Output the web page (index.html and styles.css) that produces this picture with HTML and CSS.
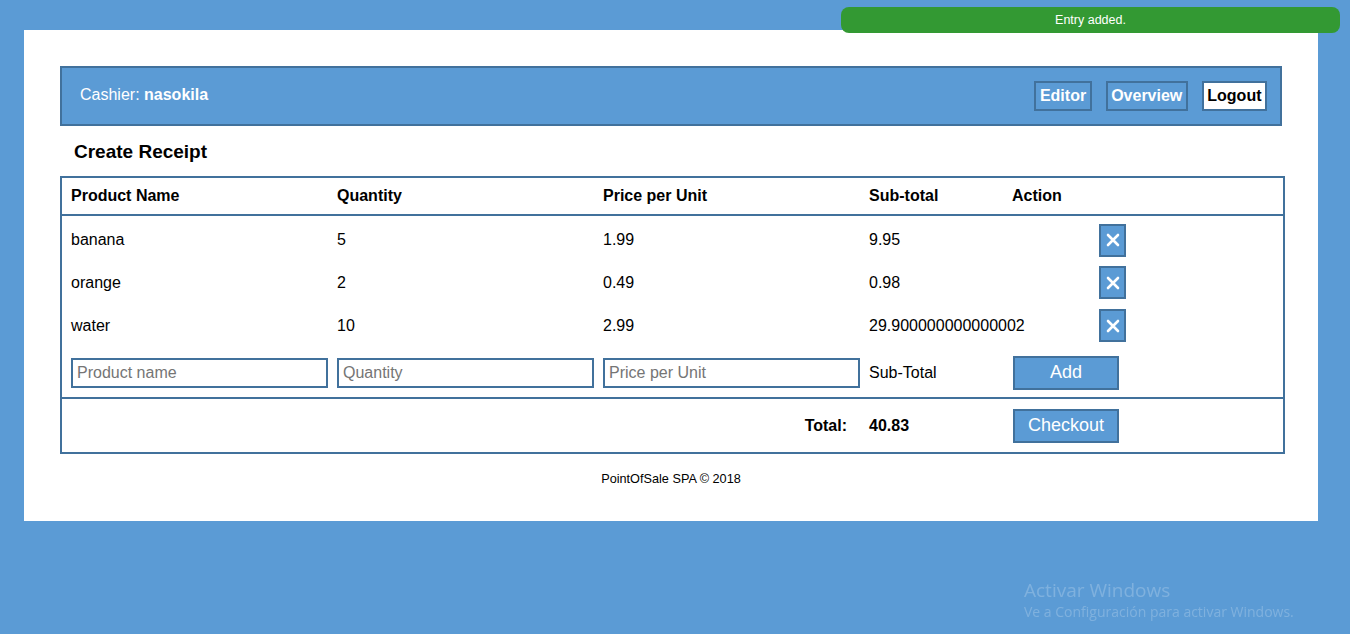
FILE: index.html
```html
<!DOCTYPE html>
<html>
<head>
<meta charset="utf-8">
<link rel="stylesheet" href="styles.css">
</head>
<body>
<div class="toast">Entry added.</div>
<main class="page">
  <header class="topbar">
    <div class="cashier">Cashier: <b>nasokila</b></div>
    <nav class="nav">
      <a class="navbtn">Editor</a>
      <a class="navbtn">Overview</a>
      <a class="navbtn active">Logout</a>
    </nav>
  </header>
  <h2 class="title">Create Receipt</h2>
  <table class="receipt">
    <colgroup>
      <col class="c1"><col class="c2"><col class="c3"><col class="c4"><col class="c5">
    </colgroup>
    <thead>
      <tr><th>Product Name</th><th>Quantity</th><th>Price per Unit</th><th>Sub-total</th><th>Action</th></tr>
    </thead>
    <tbody>
      <tr class="item"><td>banana</td><td>5</td><td>1.99</td><td>9.95</td><td><button class="del"><svg width="14" height="14" viewBox="0 0 14 14"><path d="M2 2L12 12M12 2L2 12" stroke="#fff" stroke-width="2.6" stroke-linecap="round"/></svg></button></td></tr>
      <tr class="item"><td>orange</td><td>2</td><td>0.49</td><td>0.98</td><td><button class="del"><svg width="14" height="14" viewBox="0 0 14 14"><path d="M2 2L12 12M12 2L2 12" stroke="#fff" stroke-width="2.6" stroke-linecap="round"/></svg></button></td></tr>
      <tr class="item"><td>water</td><td>10</td><td>2.99</td><td>29.900000000000002</td><td><button class="del"><svg width="14" height="14" viewBox="0 0 14 14"><path d="M2 2L12 12M12 2L2 12" stroke="#fff" stroke-width="2.6" stroke-linecap="round"/></svg></button></td></tr>
      <tr class="entry">
        <td><input class="field" placeholder="Product name"></td>
        <td><input class="field" placeholder="Quantity"></td>
        <td><input class="field" placeholder="Price per Unit"></td>
        <td>Sub-Total</td>
        <td><button class="action">Add</button></td>
      </tr>
    </tbody>
    <tfoot>
      <tr class="totals">
        <td colspan="3" class="tlabel">Total:</td>
        <td class="tvalue">40.83</td>
        <td><button class="action">Checkout</button></td>
      </tr>
    </tfoot>
  </table>
  <footer class="foot">PointOfSale SPA © 2018</footer>
</main>
<div class="watermark">
  <div class="wm1">Activar Windows</div>
  <div class="wm2">Ve a Configuración para activar Windows.</div>
</div>
</body>
</html>
```
FILE: styles.css
```css
* { box-sizing: border-box; }
html, body { margin: 0; padding: 0; }
body {
  background: #5b9bd5;
  font-family: "Liberation Sans", Arial, sans-serif;
  color: #000;
  height: 634px;
  overflow: hidden;
  padding: 30px 32px 0 24px;
}
.page {
  background: #fff;
  width: 1294px;
  padding: 36px 36px 35px 36px;
}
.topbar {
  height: 60px;
  background: #5b9bd5;
  border: 2px solid #41719c;
  display: flex;
  align-items: center;
  justify-content: space-between;
  padding: 0 13px 0 18px;
}
.cashier {
  color: #fff;
  font-size: 16px;
  margin-top: -3px;
}
.nav { display: flex; gap: 14px; }
.navbtn {
  display: block;
  height: 30px;
  line-height: 26px;
  padding: 0 3.5px;
  border: 2px solid #41719c;
  color: #fff;
  font-weight: bold;
  font-size: 16px;
}
.navbtn.active { background: #fff; color: #000; }
.title {
  font-size: 19px;
  line-height: 24px;
  margin: 14px 0 12px 14px;
}
.receipt {
  width: calc(100% + 3px);
  table-layout: fixed;
  border-collapse: collapse;
  border: 2px solid #41719c;
  font-size: 16px;
}
.c1 { width: 267px; }
.c2, .c3 { width: 266px; }
.c4 { width: 143px; }
.receipt th, .receipt td {
  padding: 0 0 0 9px;
  text-align: left;
  vertical-align: middle;
}
.receipt th { height: 38px; font-weight: bold; }
.receipt thead tr { border-bottom: 2px solid #41719c; }
.item td { height: 43px; padding-top: 6px; }
.entry td { height: 54px; padding-top: 4px; }
.entry { border-bottom: 2px solid #41719c; }
.totals td { height: 55px; padding-top: 0; }
.del {
  margin-left: 87px;
  width: 27px;
  height: 33px;
  background: #5b9bd5;
  border: 2px solid #41719c;
  padding: 0;
  display: flex;
  align-items: center;
  justify-content: center;
}
.field {
  width: 100%;
  height: 30px;
  border: 2px solid #41719c;
  font-family: "Liberation Sans", Arial, sans-serif;
  font-size: 16px;
  padding: 0 4px;
  display: block;
}
.field::placeholder { color: #757575; }
.action {
  margin-left: 1px;
  width: 106px;
  height: 34px;
  background: #5b9bd5;
  border: 2px solid #41719c;
  color: #fff;
  font-family: "Liberation Sans", Arial, sans-serif;
  font-size: 18px;
  padding: 0;
  display: block;
}
.tlabel { text-align: right !important; padding-right: 13px !important; font-weight: bold; }
.tvalue { font-weight: bold; }
.foot {
  text-align: center;
  font-size: 12.7px;
  line-height: 14px;
  margin-top: 18px;
}
.toast {
  position: fixed;
  top: 7px;
  left: 841px;
  width: 499px;
  height: 26px;
  background: #339933;
  border-radius: 8px;
  color: #fff;
  font-size: 12.5px;
  display: flex;
  align-items: center;
  justify-content: center;
}
.watermark {
  position: fixed;
  left: 1024px;
  top: 578px;
  color: rgba(255,255,255,0.22);
  font-family: "Open Sans", "Liberation Sans", sans-serif;
}
.wm1 { font-size: 19px; line-height: 24px; }
.wm2 { font-size: 14px; line-height: 20px; }
```
